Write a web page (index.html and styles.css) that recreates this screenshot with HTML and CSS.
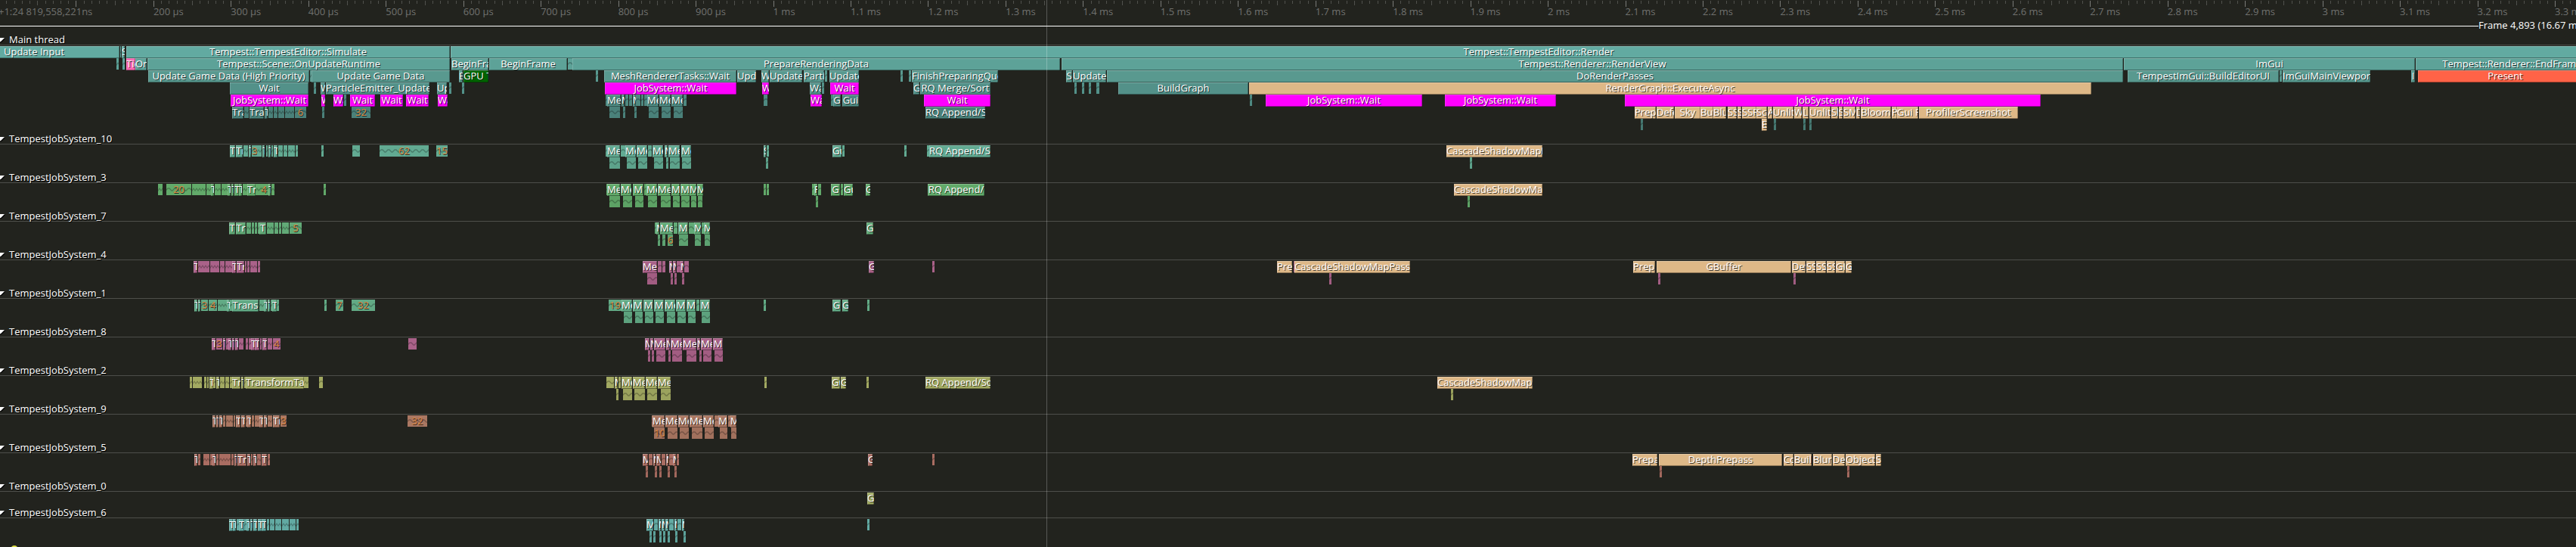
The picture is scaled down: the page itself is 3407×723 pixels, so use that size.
FILE: index.html
```html
<!DOCTYPE html>
<html lang="en">
<head>
<meta charset="utf-8">
<title>Profiler timeline</title>
<link rel="stylesheet" href="styles.css">
</head>
<body>
<svg class="defs" aria-hidden="true">
  <defs>
    <pattern id="wave" width="9" height="15" patternUnits="userSpaceOnUse">
      <path d="M-1 9 L2 6 L4 6 L7 9 L8 9 L11 6" fill="none" stroke="#000" stroke-opacity=".27" stroke-width="1.3"/>
    </pattern>
    <pattern id="dense" width="4" height="15" patternUnits="userSpaceOnUse">
      <path d="M-1 8 L0 9 L2 6 L4 9 L5 8" fill="none" stroke="#000" stroke-opacity=".27" stroke-width="1.2"/>
    </pattern>
  </defs>
</svg>
<main class="timeline">
  <div class="ruler" id="ruler"></div>
  <div class="frame"><span class="frame-line"></span><span class="frame-name">Frame 4,893 (16.67 ms)</span></div>
  <div id="threads"></div>
  <svg class="lock" viewBox="0 0 12 12"><circle cx="6" cy="6" r="5" fill="#dddd44"/></svg>
  <div class="cursor"></div>
</main>
<script src="timeline.js"></script>
</body>
</html>
```
FILE: styles.css
```css
* {
  box-sizing: border-box;
}

body {
  margin: 0;
  height: 100vh;
  overflow: hidden;
  background: #22231e;
  color: #fff;
  font-family: "Open Sans", "Noto Sans", sans-serif;
  font-size: 13px;
}

.defs {
  display: block;
  width: 0;
  height: 0;
}

.timeline {
  position: relative;
  height: 100%;
  overflow: hidden;
}

.ruler {
  display: flex;
  height: 26px;
  margin-left: -2px;
  padding-top: 1px;
  color: #70716e;
}

.segment {
  flex: none;
}

.ticks {
  display: flex;
  height: 8px;
}

.tick {
  flex: 1;
  height: 4px;
  border-left: 1px solid #50514d;
}

.tick:nth-child(6) {
  height: 6px;
}

.tick:first-child {
  height: 8px;
  border-color: #7a7b78;
}

.time {
  display: block;
  line-height: 12px;
  white-space: nowrap;
}

.frame {
  display: flex;
  align-items: center;
  height: 16px;
}

.frame-line {
  flex: 1;
  height: 1px;
  background: #fff;
}

.frame-name {
  align-self: flex-start;
  width: 129px;
  line-height: 14px;
  white-space: nowrap;
  overflow: hidden;
}

.thread-header {
  display: flex;
  align-items: center;
  width: 100%;
  height: 18px;
  padding: 3px 0 0;
  border: 0;
  border-bottom: 1px solid #4d4e4a;
  background: none;
  color: #fff;
  font: inherit;
  line-height: 14px;
  text-shadow: 1px 1px #000;
  text-align: left;
}

.arrow {
  width: 7px;
  height: 7px;
  margin-right: 5px;
}

.zones {
  padding-top: 1px;
}

.row {
  display: flex;
  height: 16px;
  overflow: hidden;
}

.zone,
.fold {
  display: flex;
  flex: none;
  justify-content: safe center;
  overflow: hidden;
  line-height: 14px;
  white-space: nowrap;
  background: var(--zone);
  text-shadow: 1px 1px rgba(0, 0, 0, .7);
}

.zone {
  height: 16px;
  box-shadow: inset 0 1px rgba(255, 255, 255, .24), inset 1px 0 rgba(255, 255, 255, .16), inset 0 -1px rgba(0, 0, 0, .38), inset -1px 0 rgba(0, 0, 0, .32);
}

.fold {
  position: relative;
  height: 15px;
  color: #dd8844;
}

.fold svg {
  position: absolute;
  width: 100%;
  height: 15px;
}

.count {
  position: relative;
}

.gpu { background: #deb887; }
.wait { background: #ff00ff; }
.pink { background: #ff69b4; }
.green { background: #006400; }
.red { background: #ff6347; }

.lock {
  display: block;
  width: 12px;
  height: 12px;
  margin: 2px 0 0 13px;
}

.cursor {
  position: absolute;
  top: 0;
  bottom: 0;
  left: 40.63%;
  width: 1px;
  background: rgba(255, 255, 255, .25);
}
```
FILE: timeline.js
```js
// Visible range, in timeline units. 100 µs take 102.4 units.
const SPAN = 3407;
const SEGMENT = 102.4;
const DENSE_UNTIL = 420;

// A zone is "start end name". "kind:" before the name picks a fixed colour,
// "#n" is the count of folded zones, and no name is a fold without a count.
const threads = [
  { name: 'Main thread', colors: ['#62aaa1', '#5da298', '#59998f', '#539189', '#4e8981', '#4a817a', '#467972'], rows: [
    '-68 158 Update Input|159 160|161 165 S|167 595 Tempest::TempestEditor::Simulate|596 3474 Tempest::TempestEditor::Render',
    '154 157|162 165|167 179 pink:Tick|179 194 OnUpdate|195 595 Tempest::Scene::OnUpdateRuntime|597 646 BeginFrame|647 750 BeginFrame|751 757|757 1402 PrepareRenderingData|1404 2808 Tempest::Renderer::RenderView|2809 3194 ImGui|3195 3450 Tempest::Renderer::EndFrame',
    '196 409 Update Game Data (High Priority)|410 412|412 595 Update Game Data|607 612 B|613 646 green:GPU Tr|788 791|799 974 MeshRendererTasks::Wait|975 1000 Update|1007 1017 Wait|1018 1061 Update|1063 1090 Particle|1091 1094|1097 1136 Update|1191 1194|1202 1205|1206 1320 FinishPreparingQueue|1410 1418 S|1419 1463 Update|1464 2808 DoRenderPasses|2814 3014 TempestImGui::BuildEditorUI|3015 3018|3019 3135 ImGuiMainViewport|3189 3194 I|3198 3429 red:Present',
    '304 408 Wait|415 418|424 430 Wait|431 568 ParticleEmitter_Update|578 591 Update|594 597|611 614|800 974 wait:JobSystem::Wait|1008 1017 wait:Wait|1071 1086 Wait|1087 1090|1098 1136 wait:Wait|1208 1216 G|1217 1310 RQ Merge/Sort|1421 1424|1431 1434|1440 1443|1450 1454|1479 1651 BuildGraph|1652 2766 gpu:RenderGraph::ExecuteAsync',
    '305 408 wait:JobSystem::Wait|425 430 wait:Wait|441 454 wait:Wait|455 458|463 496 wait:Wait|503 533 wait:Wait|537 567 wait:Wait|579 592 wait:Wait|801 803|803 821 Mesh|822 826 Mesh|827 831|832 836|837 841 Mesh|841 847|848 851|852 856|856 871 Mesh|872 887 Mesh|888 903 Mesh|904 908|1010 1015|1072 1087 wait:Wait|1099 1102|1102 1112 G|1114 1136 Gui|1222 1310 wait:Wait|1653 1656|1674 1881 wait:JobSystem::Wait|1911 2058 wait:JobSystem::Wait|2149 2699 wait:JobSystem::Wait',
    '307 322 Trans|323 329|330 349 Trans|350 354 T|355 361|362 367|368 376|377 389|390 405 #6|426 429|465 490 #32|806 820|824 827|839 842|858 871|875 887|891 903|1224 1303 RQ Append/Sort|2162 2190 gpu:Prep|2191 2214 gpu:Deferred|2215 2249 gpu:Sky|2249 2266 gpu:Build|2266 2283 gpu:Blur|2285 2297 gpu:SSAO|2298 2303 gpu:S|2304 2323 gpu:SSR|2323 2337 gpu:Scene|2338 2344 gpu:A|2345 2372 gpu:Unlit|2373 2383 gpu:W|2384 2392 gpu:L|2393 2421 gpu:Unlit|2422 2431 gpu:Sk|2432 2437 gpu:S|2438 2454 gpu:SMAA|2455 2460 gpu:D|2461 2501 gpu:Bloom|2502 2509 gpu:P|2509 2537 gpu:Gui R|2538 2669 gpu:ProfilerScreenshot',
    '2170 2173|2330 2337 gpu:E|2346 2349|2385 2388|2393 2396'
  ] },
  { name: 'TempestJobSystem_10', colors: ['#62aa92', '#5da28b'], rows: [
    '304 311 T|312 321 Tr|322 328|329 332 T|333 340 #3|340 346|347 350 T|352 354|355 358 T|359 361|362 367 T|368 374|375 380|381 390|391 394|425 428|466 476|502 567 #62|577 592 #15|801 803|803 820 Mesh|821 827|827 841 Mesh|842 856 Mesh|857 862|863 877 Mesh|879 883 M|884 899 Mesh|901 914 Mesh|1010 1013 S|1014 1017|1101 1113 Gui|1114 1117|1196 1199|1226 1229|1229 1310 RQ Append/Sort|1913 2040 gpu:CascadeShadowMapPass',
    '806 820|829 841|844 856|865 877|881 884|886 899|902 914|1013 1016|1944 1947'
  ] },
  { name: 'TempestJobSystem_3', colors: ['#62aa6a', '#5da265'], rows: [
    '209 215|220 253 #20|254 272|273 279|279 283 T|284 292|293 301|301 305 T|306 309 T|310 316 T|316 320 T|321 327|327 338 Tr|338 343|343 355 #4|355 358 T|359 363|428 431|802 803|803 820 Mesh|821 835 Mesh|837 851 M|852 855|855 869 Mesh|870 887 Mesh|888 899 M|900 912 M|912 921 M|922 930 M|1010 1013|1014 1017|1074 1077|1077 1081 P|1082 1086|1099 1111 G|1112 1115|1116 1128 Gui|1145 1151 G|1227 1302 RQ Append/|1923 2040 gpu:CascadeShadowMapPass',
    '806 820|824 836|840 851|857 869|874 887|890 899|901 912|914 921|923 929|1079 1082|1941 1944'
  ] },
  { name: 'TempestJobSystem_7', colors: ['#62aa77', '#5da271'], rows: [
    '303 311 T|312 325 Tr|326 332|333 336|337 340|341 343|343 352 T|353 362|363 368|369 372|373 382|383 399 #5|866 868|868 872 M|873 890 Mesh|891 896|897 910 M|911 918|918 927 M|928 931|931 939 M|1146 1155 G',
    '870 873|876 880|883 890 #6|898 910|919 927|932 939'
  ] },
  { name: 'TempestJobSystem_4', colors: ['#aa6289', '#a25d82'], rows: [
    '256 261 T|262 277|278 290|291 297|298 307|307 312 T|313 323 Tr|324 326|327 330|331 340|341 344|850 869 Me|870 875|876 880|885 889 M|890 894 M|895 900|900 904 M|905 911|1149 1156 G|1233 1236|1689 1709 gpu:Prepare|1711 1712|1712 1865 gpu:CascadeShadowMapPass|2160 2189 gpu:Prepare|2191 2369 gpu:GBuffer|2370 2388 gpu:Def|2389 2401 gpu:SSAO|2402 2415 gpu:SSR|2416 2427 gpu:SSR|2428 2440 gpu:GI|2441 2449 gpu:G',
    '856 869|887 890|892 895|902 905|1758 1761|2193 2196|2372 2375'
  ] },
  { name: 'TempestJobSystem_1', colors: ['#62aa85', '#5da27e'], rows: [
    '257 261 T|262 265 T|266 275 #3|276 287 #4|288 300|300 304 T|304 307|307 342 Trans|343 349|349 353 T|354 357 T|358 360|360 366 T|366 369|429 432|444 454 #7|465 496 #32|805 822 #19|822 836 Mesh|837 850 M|851 864 M|865 878 M|879 893 Mesh|894 907 M|908 920 M|921 925|926 939 M|1010 1013|1101 1112 G|1114 1122 G|1147 1150',
    '825 836|840 850|853 864|867 878|882 893|896 907|910 920|928 939'
  ] },
  { name: 'TempestJobSystem_8', colors: ['#aa6289', '#a25d82'], rows: [
    '280 285 T|286 294 #3|295 298 T|299 302|302 306 T|307 310 T|311 315 T|316 322|325 328|329 332|332 337 T|337 343 T|344 346|347 353 T|354 360|361 371 #4|540 551|853 859 M|860 864 M|865 880 Mesh|881 886 M|887 902 Mesh|903 921 Mesh|922 926 M|927 942 Mesh|943 956 M',
    '857 860|862 865|868 880|884 887|889 902|908 921|925 928|930 941|945 956'
  ] },
  { name: 'TempestJobSystem_2', colors: ['#a3aa62', '#9ba25d'], rows: [
    '251 254|255 267|270 273|274 276|277 282 T|282 285|286 290 T|291 297|298 303|304 307|307 318 Tr|319 322 T|323 325|325 402 TransformTask|402 408|422 427|802 812|813 817 M|818 821|822 836 Mesh|837 853 Mesh|854 869 Mesh|870 887 Mesh|1011 1014|1100 1111 Gui|1112 1119 G|1146 1149|1224 1310 RQ Append/Sort|1901 2027 gpu:CascadeShadowMapPass',
    '815 818|824 836|839 853|856 869|874 887|1919 1922'
  ] },
  { name: 'TempestJobSystem_9', colors: ['#aa7762', '#a2715d'], rows: [
    '281 285 T|286 289 T|290 294 T|295 298|299 308|309 311|312 318 T|319 324 T|325 327|327 332 T|333 336|337 343|343 348 T|349 353 T|354 360|361 370 Tr|371 379 #3|539 565 #32|862 863|863 879 Mesh|880 896 Mesh|897 911 Mesh|912 929 Mesh|930 944 Mesh|945 950|950 962 M|963 966|966 974 M',
    '865 879 #10|883 896|899 911|915 929|932 944|952 962|967 974'
  ] },
  { name: 'TempestJobSystem_5', colors: ['#aa6d62', '#a2685d'], rows: [
    '257 261 T|262 265|269 277|278 281|281 285 T|286 289|290 305|306 309|310 313 T|314 326 Tr|327 331 T|332 334|335 339 T|340 345|346 353 T|354 357|850 857 M|858 863|864 867 M|868 874 M|875 880|881 884 M|885 890|890 894 M|895 898|1148 1154 G|1233 1236|2159 2192 gpu:Prepare|2194 2357 gpu:DepthPrepass|2359 2372 gpu:Copy|2373 2396 gpu:Build|2398 2423 gpu:Blur|2424 2440 gpu:Deferred|2441 2480 gpu:Object|2481 2488 gpu:S',
    '854 857|866 869|872 875|883 886|892 895|2195 2198|2443 2446'
  ] },
  { name: 'TempestJobSystem_0', colors: ['#a0aa62'], rows: ['1147 1156 G'] },
  { name: 'TempestJobSystem_6', colors: ['#62aaa3', '#5da29b'], rows: [
    '303 308 T|308 312 T|313 316|316 323 T|323 326|326 330 T|331 334 T|335 340 T|341 346 T|346 352 T|353 356|357 363|364 372|373 382|383 391|392 395|855 864 M|865 870|871 874 M|875 879 M|880 884 M|885 891|892 895 M|896 901|902 905 M|1147 1150',
    '859 862|864 867|872 875|877 880|883 886|893 896|904 907'
  ] }
];

// Rounded up, so that the many small zones of a row do not add up short.
const percent = units => Math.ceil(units / SPAN * 1e6) / 1e4 + '%';

function zoneHtml(text, previousEnd) {
  const [, start, end, kind, name] = text.match(/^(-?\d+) (\d+)(?: (?:(gpu|wait|pink|green|red):(?!:))?(.*))?$/);
  const style = `margin-left:${percent(start - previousEnd)};width:${percent(end - start)}`;
  if (!name || name[0] === '#') {
    const pattern = !name && start < DENSE_UNTIL ? 'dense' : 'wave';
    const count = name ? `<span class="count">${name.slice(1)}</span>` : '';
    return `<div class="fold" style="${style}"><svg><rect width="100%" height="15" fill="url(#${pattern})"/></svg>${count}</div>`;
  }
  return `<div class="zone ${kind || ''}" style="${style}">${name}</div>`;
}

function rowHtml(row, color) {
  let previousEnd = 0;
  const zones = row.split('|').map(text => {
    const html = zoneHtml(text, previousEnd);
    previousEnd = Number(text.split(' ')[1]);
    return html;
  });
  return `<div class="row" style="--zone:${color}">${zones.join('')}</div>`;
}

document.getElementById('threads').innerHTML = threads.map(thread => `
  <section>
    <button class="thread-header"><svg class="arrow" viewBox="0 0 7 7"><path d="M1 2H7L2 7H1Z" fill="#000"/><path d="M0 1H6L1 6H0Z" fill="#fff"/></svg>${thread.name}</button>
    <div class="zones">${thread.rows.map((row, i) => rowHtml(row, thread.colors[i])).join('')}</div>
  </section>`).join('');

function timeLabel(i) {
  if (i === 0) return '+1:24 819,558,221ns';
  if (i === 1) return '';
  return i < 10 ? `${i * 100} µs` : `${i / 10} ms`;
}

document.getElementById('ruler').innerHTML = Array.from({ length: 34 }, (_, i) => `
  <div class="segment" style="width:${percent(SEGMENT)}">
    <div class="ticks">${'<i class="tick"></i>'.repeat(10)}</div>
    <span class="time">${timeLabel(i)}</span>
  </div>`).join('');
```
